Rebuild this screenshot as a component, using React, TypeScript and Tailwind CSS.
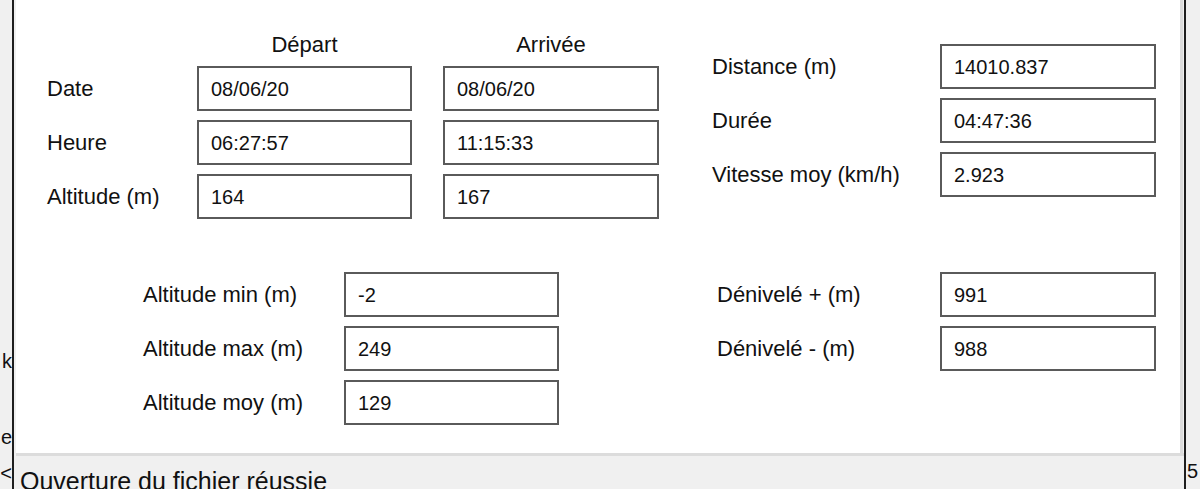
import React from 'react';

type Field = { label: string; value: string };

const font = "font-['Liberation_Sans','DejaVu_Sans',Arial,sans-serif]";

const Box: React.FC<{ value: string; className?: string }> = ({ value, className = '' }) => (
  <div
    className={`h-[45px] border-2 border-[#5a5a5a] bg-white flex items-center pl-[12px] text-[20px] text-[#111] ${className}`}
  >
    {value}
  </div>
);

const trip = [
  { label: 'Date', start: '08/06/20', end: '08/06/20' },
  { label: 'Heure', start: '06:27:57', end: '11:15:33' },
  { label: 'Altitude (m)', start: '164', end: '167' },
];

const totals: Field[] = [
  { label: 'Distance (m)', value: '14010.837' },
  { label: 'Durée', value: '04:47:36' },
  { label: 'Vitesse moy (km/h)', value: '2.923' },
];

const altitudes: Field[] = [
  { label: 'Altitude min (m)', value: '-2' },
  { label: 'Altitude max (m)', value: '249' },
  { label: 'Altitude moy (m)', value: '129' },
];

const elevation: Field[] = [
  { label: 'Dénivelé + (m)', value: '991' },
  { label: 'Dénivelé - (m)', value: '988' },
];

const FieldList: React.FC<{ fields: Field[]; labelWidth: string; boxWidth: string }> = ({
  fields,
  labelWidth,
  boxWidth,
}) => (
  <div className="flex flex-col gap-[9px]">
    {fields.map((f) => (
      <div key={f.label} className="flex items-center">
        <div className={`${labelWidth} text-[22px] text-[#111] whitespace-nowrap`}>{f.label}</div>
        <Box value={f.value} className={boxWidth} />
      </div>
    ))}
  </div>
);

export default function App() {
  return (
    <div className={`flex w-[1200px] h-[489px] overflow-hidden bg-[#f0f0f0] ${font}`}>
      {/* sidebar behind the dialog */}
      <div className="w-[12px] flex flex-col items-end text-[20px] text-[#111] leading-[22px]">
        <div className="mt-[350px]">k</div>
        <div className="mt-[54px]">e</div>
        <div className="mt-[14px]">&lt;</div>
      </div>
      <div className="w-[2px] bg-[#1e1e1e]" />

      <div className="w-[1170px] flex flex-col pl-[2px]">
        <div className="h-[453px] shrink-0 bg-white border-r-[3px] border-[#dcdcdc] mr-[1px] pl-[31px]">
          {/* top section */}
          <div className="flex pt-[28px]">
            <div className="flex flex-col">
              <div className="flex h-[38px] text-[22px] text-[#111]">
                <div className="w-[150px]" />
                <div className="w-[215px] text-center">Départ</div>
                <div className="w-[31px]" />
                <div className="w-[216px] text-center">Arrivée</div>
              </div>
              <div className="flex flex-col gap-[9px]">
                {trip.map((r) => (
                  <div key={r.label} className="flex items-center">
                    <div className="w-[150px] text-[22px] text-[#111]">{r.label}</div>
                    <Box value={r.start} className="w-[215px]" />
                    <div className="w-[31px]" />
                    <Box value={r.end} className="w-[216px]" />
                  </div>
                ))}
              </div>
            </div>
            <div className="ml-[53px] mt-[16px]">
              <FieldList fields={totals} labelWidth="w-[228px]" boxWidth="w-[216px]" />
            </div>
          </div>

          {/* bottom section */}
          <div className="flex mt-[53px]">
            <div className="ml-[96px]">
              <FieldList fields={altitudes} labelWidth="w-[201px]" boxWidth="w-[215px]" />
            </div>
            <div className="ml-[158px]">
              <FieldList fields={elevation} labelWidth="w-[223px]" boxWidth="w-[216px]" />
            </div>
          </div>
        </div>

        {/* status bar */}
        <div className="shrink-0 border-t-[3px] border-[#dcdcdc] pt-[11px] pl-[4px] text-[25px] leading-[29px] text-[#111] whitespace-nowrap">
          Ouverture du fichier réussie
        </div>
      </div>

      <div className="w-[2px] bg-[#1e1e1e]" />
      <div className="flex-1 text-[20px] text-[#111] leading-[22px]">
        <div className="mt-[460px] ml-[1px]">5</div>
      </div>
    </div>
  );
}
